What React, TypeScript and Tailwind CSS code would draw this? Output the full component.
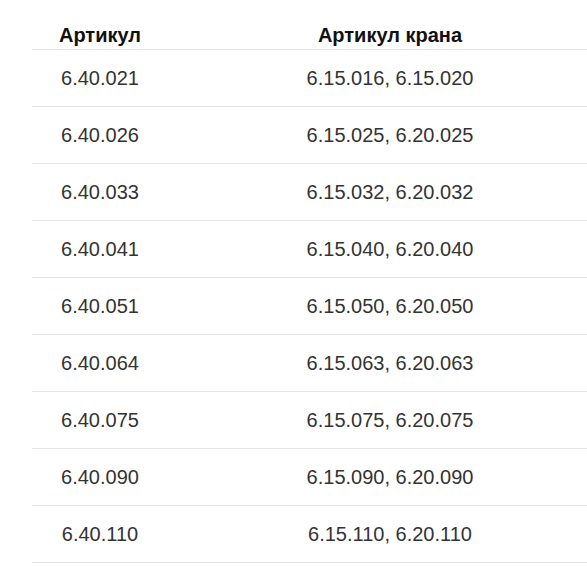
import React from 'react';

type Row = {
  article: string;
  craneArticles: string;
};

const rows: Row[] = [
  { article: '6.40.021', craneArticles: '6.15.016, 6.15.020' },
  { article: '6.40.026', craneArticles: '6.15.025, 6.20.025' },
  { article: '6.40.033', craneArticles: '6.15.032, 6.20.032' },
  { article: '6.40.041', craneArticles: '6.15.040, 6.20.040' },
  { article: '6.40.051', craneArticles: '6.15.050, 6.20.050' },
  { article: '6.40.064', craneArticles: '6.15.063, 6.20.063' },
  { article: '6.40.075', craneArticles: '6.15.075, 6.20.075' },
  { article: '6.40.090', craneArticles: '6.15.090, 6.20.090' },
  { article: '6.40.110', craneArticles: '6.15.110, 6.20.110' },
];

const App: React.FC = () => {
  return (
    <div className="w-full min-h-screen overflow-hidden bg-white font-['Liberation_Sans',Arial,sans-serif]">
      <table className="ml-[32px] w-[580px] table-fixed border-collapse">
        <colgroup>
          <col className="w-[136px]" />
          <col className="w-[444px]" />
        </colgroup>
        <thead>
          <tr className="border-b border-[#e6e6e6]">
            <th className="pt-[24px] pb-[2px] text-center text-[20px] leading-[23px] font-bold text-[#111]">
              Артикул
            </th>
            <th className="pt-[24px] pb-[2px] text-center text-[20px] leading-[23px] font-bold text-[#111]">
              Артикул крана
            </th>
          </tr>
        </thead>
        <tbody>
          {rows.map((row) => (
            <tr key={row.article} className="h-[57px] border-b border-[#e6e6e6]">
              <td className="text-center align-middle text-[20px] leading-[23px] text-[#333]">
                {row.article}
              </td>
              <td className="text-center align-middle text-[20px] leading-[23px] text-[#333]">
                {row.craneArticles}
              </td>
            </tr>
          ))}
        </tbody>
      </table>
    </div>
  );
};

export default App;
